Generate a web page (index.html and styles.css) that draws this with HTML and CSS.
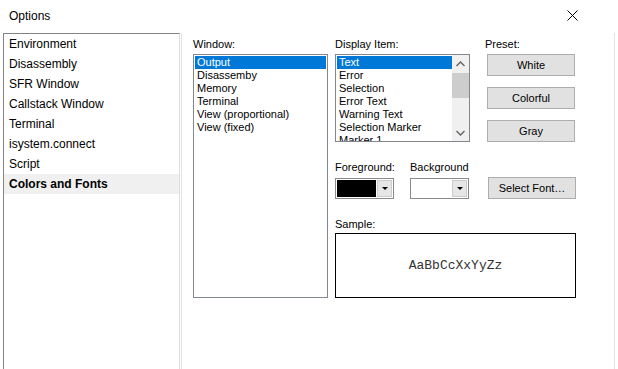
FILE: index.html
```html
<!DOCTYPE html>
<html>
<head>
<meta charset="utf-8">
<title>Options</title>
<link rel="stylesheet" href="styles.css">
</head>
<body>
<div class="window">
  <div class="titlebar">
    <span class="title">Options</span>
    <span class="close">
      <svg width="11" height="11" viewBox="0 0 11 11"><path d="M0.5 0.5 L10.5 10.5 M10.5 0.5 L0.5 10.5" stroke="#000" stroke-width="1" fill="none"/></svg>
    </span>
  </div>
  <div class="main">
    <ul class="nav">
      <li>Environment</li>
      <li>Disassembly</li>
      <li>SFR Window</li>
      <li>Callstack Window</li>
      <li>Terminal</li>
      <li>isystem.connect</li>
      <li>Script</li>
      <li class="active">Colors and Fonts</li>
    </ul>
    <div class="panel">
      <div class="col-window">
        <div class="label">Window:</div>
        <div class="listbox window-list">
          <div class="item selected">Output</div>
          <div class="item">Disassemby</div>
          <div class="item">Memory</div>
          <div class="item">Terminal</div>
          <div class="item">View (proportional)</div>
          <div class="item">View (fixed)</div>
        </div>
      </div>
      <div class="col-right">
        <div class="row-top">
          <div class="col-display">
            <div class="label">Display Item:</div>
            <div class="listbox display-list">
              <div class="items">
                <div class="item selected">Text</div>
                <div class="item">Error</div>
                <div class="item">Selection</div>
                <div class="item">Error Text</div>
                <div class="item">Warning Text</div>
                <div class="item">Selection Marker</div>
                <div class="item">Marker 1</div>
              </div>
              <div class="scrollbar">
                <div class="sb-btn">
                  <svg width="9" height="6" viewBox="0 0 9 6"><path d="M0.5 5 L4.5 1 L8.5 5" stroke="#606060" stroke-width="1.3" fill="none"/></svg>
                </div>
                <div class="sb-track"><div class="sb-thumb"></div></div>
                <div class="sb-btn">
                  <svg width="9" height="6" viewBox="0 0 9 6"><path d="M0.5 1 L4.5 5 L8.5 1" stroke="#606060" stroke-width="1.3" fill="none"/></svg>
                </div>
              </div>
            </div>
          </div>
          <div class="col-preset">
            <div class="label">Preset:</div>
            <div class="preset-buttons">
              <button class="btn">White</button>
              <button class="btn">Colorful</button>
              <button class="btn">Gray</button>
            </div>
          </div>
        </div>
        <div class="row-mid">
          <div class="field field-fg">
            <div class="label">Foreground:</div>
            <div class="combo">
              <div class="swatch swatch-black"></div>
              <div class="drop"><span class="tri"></span></div>
            </div>
          </div>
          <div class="field field-bg">
            <div class="label">Background</div>
            <div class="combo">
              <div class="swatch swatch-white"></div>
              <div class="drop"><span class="tri"></span></div>
            </div>
          </div>
          <button class="btn btn-font">Select Font…</button>
        </div>
        <div class="sample-group">
          <div class="label">Sample:</div>
          <div class="sample">AaBbCcXxYyZz</div>
        </div>
      </div>
    </div>
  </div>
</div>
</body>
</html>
```

FILE: styles.css
```css
* { box-sizing: border-box; }

html, body {
  margin: 0;
  padding: 0;
  background: #ffffff;
}

body {
  width: 618px;
  height: 369px;
  overflow: hidden;
  font-family: "Liberation Sans", Arial, sans-serif;
  color: #000;
}

.window {
  width: 618px;
  height: 369px;
  display: flex;
  flex-direction: column;
}

.titlebar {
  height: 33px;
  flex: none;
  display: flex;
  align-items: center;
  justify-content: space-between;
  padding-left: 9px;
  font-size: 12px;
}

.title { margin-top: -1px; }

.close {
  display: flex;
  margin-right: 40px;
  margin-top: -2px;
}

.main {
  flex: 1;
  display: flex;
  padding-right: 3px;
}

.nav {
  list-style: none;
  margin: 0 0 0 3px;
  padding: 0;
  width: 177px;
  border-left: 1px solid #838383;
  border-top: 1px solid #838383;
  border-right: 1px solid #dedede;
  font-size: 12px;
}

.nav li {
  height: 20px;
  line-height: 20px;
  padding-left: 5px;
}

.nav li.active {
  background: #f0f0f0;
  font-weight: bold;
}

.panel {
  flex: 1;
  display: flex;
  margin-left: 1px;
  border-left: 1px solid #e3e3e3;
  border-right: 1px solid #e3e3e3;
  padding: 5px 0 0 11px;
  font-size: 11px;
}

.label {
  height: 13px;
  line-height: 13px;
  margin-bottom: 3px;
  white-space: nowrap;
}

.listbox {
  border: 1px solid #828790;
  padding: 1px;
  background: #fff;
}

.item {
  height: 13px;
  line-height: 13px;
  padding-left: 2px;
  white-space: nowrap;
  overflow: hidden;
}

.item.selected {
  background: #0078d7;
  color: #fff;
}

.window-list {
  width: 135px;
  height: 244px;
}

.col-right {
  margin-left: 7px;
  display: flex;
  flex-direction: column;
}

.row-top {
  display: flex;
}

.display-list {
  width: 135px;
  height: 88px;
  display: flex;
  padding: 1px 0 0 1px;
  overflow: hidden;
}

.display-list .items {
  flex: 1;
  overflow: hidden;
}

.scrollbar {
  width: 17px;
  background: #f0f0f0;
  display: flex;
  flex-direction: column;
  margin-top: -1px;
}

.sb-btn {
  height: 17px;
  display: flex;
  align-items: center;
  justify-content: center;
}

.sb-track {
  flex: 1;
  padding-top: 1px;
}

.sb-thumb {
  height: 25px;
  background: #cdcdcd;
}

.col-preset {
  margin-left: 15px;
}

.preset-buttons {
  display: flex;
  flex-direction: column;
  gap: 11px;
  margin-left: 2px;
  margin-top: 1px;
}

.btn {
  width: 88px;
  height: 22px;
  padding: 0;
  background: #e1e1e1;
  border: 1px solid #adadad;
  font-family: "Liberation Sans", Arial, sans-serif;
  font-size: 11px;
  color: #000;
}

.row-mid {
  display: flex;
  align-items: flex-end;
  margin-top: 19px;
}

.field-fg { width: 59px; }
.field-bg { width: 59px; margin-left: 16px; }

.field .label { margin-bottom: 4px; }

.combo {
  height: 21px;
  border: 1px solid #8a8a8a;
  padding: 1px;
  display: flex;
  background: #fff;
}

.swatch {
  flex: 1;
  margin-right: 1px;
}

.swatch-black { background: #000; }
.swatch-white { background: #fff; }

.drop {
  width: 15px;
  background: #e6e6e6;
  border: 1px solid #cccccc;
  display: flex;
  align-items: center;
  justify-content: center;
}

.tri {
  width: 0;
  height: 0;
  border-left: 3px solid transparent;
  border-right: 3px solid transparent;
  border-top: 3px solid #000;
}

.btn-font {
  margin-left: 19px;
}

.sample-group {
  margin-top: 19px;
}

.sample-group .label { margin-bottom: 2px; }

.sample {
  width: 241px;
  height: 65px;
  border: 1px solid #000;
  display: flex;
  align-items: center;
  justify-content: center;
  font-family: "Liberation Mono", "Courier New", monospace;
  font-size: 13px;
  color: #333;
}
```
